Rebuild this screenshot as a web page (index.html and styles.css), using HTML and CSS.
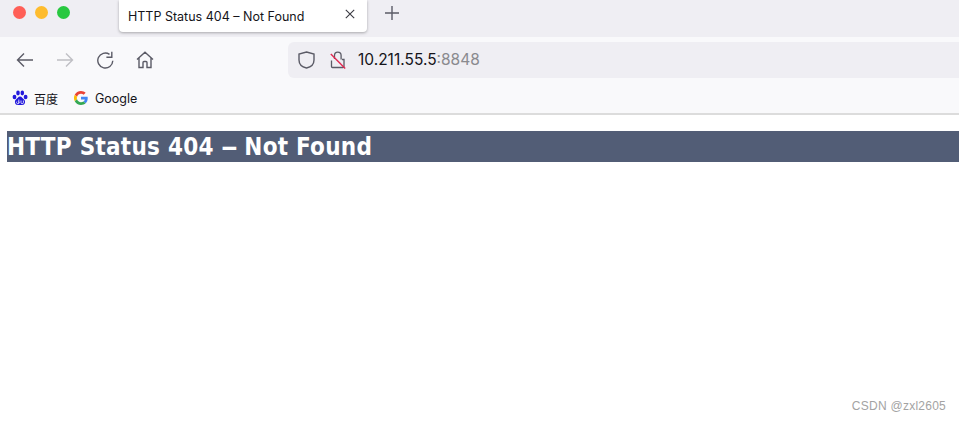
FILE: index.html
```html
<!DOCTYPE html>
<html lang="en">
<head>
    <meta charset="UTF-8">
    <title>HTTP Status 404 – Not Found</title>
    <link rel="stylesheet" href="styles.css">
</head>
<body>
    <div class="browser">
        <div class="tabstrip">
            <div class="traffic">
                <span class="dot dot-red"></span>
                <span class="dot dot-yellow"></span>
                <span class="dot dot-green"></span>
            </div>
            <div class="tab">
                <span class="tab-title">HTTP Status 404 – Not Found</span>
                <svg class="tab-close" width="10" height="10" viewBox="0 0 10 10"><path d="M.8.8l8.4 8.4M9.2.8L.8 9.2"/></svg>
            </div>
            <svg class="new-tab" width="14" height="14" viewBox="0 0 14 14"><path d="M7 0v14M0 7h14"/></svg>
        </div>
        <div class="toolbar">
            <div class="nav">
                <svg class="icon" width="18" height="16" viewBox="0 0 18 16"><path d="M17 8H1.500M8 1.500L1.500 8 8 14.500"/></svg>
                <svg class="icon icon-off" width="18" height="16" viewBox="0 0 18 16"><path d="M1 8h15.500M10 1.500L16.500 8 10 14.500"/></svg>
                <svg class="icon" width="18" height="18" viewBox="0 0 18 18"><path d="M16.800 9.800A7.500 7.500 0 1 1 13.500 3.300M15.800 .8v5.400h-5.400"/></svg>
                <svg class="icon" width="18" height="18" viewBox="0 0 18 18"><path d="M1 8.500L9 1.300l8 7.200M3 7v9.500h4v-5a1 1 0 0 1 1-1h2a1 1 0 0 1 1 1v5h4V7"/></svg>
            </div>
            <div class="urlbar">
                <svg class="icon" width="17" height="18" viewBox="0 0 17 18"><path d="M8.500 1L16 3v6c0 4-3 7-7.500 8C4 16 1 13 1 9V3z"/></svg>
                <svg class="lock" width="16" height="18" viewBox="0 0 16 18">
                    <path class="lock-body" d="M1.500 9.500v6a1 1 0 0 0 1 1h10.500a1 1 0 0 0 1-1v-7h-2M4.500 8V4.500a3.300 3.300 0 0 1 6.600 0v4"/>
                    <path class="lock-slash" d="M.8 3l14.400 14.400"/>
                </svg>
                <span class="url">10.211.55.5<span class="url-port">:8848</span></span>
            </div>
        </div>
        <div class="bookmarks">
            <div class="bookmark">
                <svg width="16" height="16" viewBox="0 0 16 16" fill="#2319dc">
                    <ellipse cx="2.500" cy="7" rx="1.900" ry="2.300"/>
                    <ellipse cx="6" cy="3" rx="1.800" ry="2.400"/>
                    <ellipse cx="10.300" cy="3" rx="1.800" ry="2.400"/>
                    <ellipse cx="13.600" cy="7" rx="1.900" ry="2.300"/>
                    <path d="M8 6.500c2 0 2.500 2 4 3 1.800 1.300 1.300 5.500-1.500 5.500H5.500C2.700 15 2.200 10.800 4 9.500c1.500-1 2-3 4-3z"/>
                    <path d="M6.800 9.500v3.800M4.800 11.600a1.300 1.300 0 1 0 2 0M9 10.500v2a1.200 1.200 0 0 0 2.400 0v-2" fill="none" stroke="#fff" stroke-width=".8"/>
                </svg>
                <span>百度</span>
            </div>
            <div class="bookmark">
                <svg width="14" height="14" viewBox="0 0 48 48">
                    <path fill="#ea4335" d="M24 9.500c3.500 0 6.700 1.300 9.100 3.500l6.800-6.800C35.800 2.400 30.300 0 24 0 14.600 0 6.500 5.400 2.600 13.200l7.900 6.200C12.400 13.600 17.700 9.500 24 9.500z"/>
                    <path fill="#4285f4" d="M47 24.500c0-1.600-.1-3.100-.4-4.500H24v9h13c-.6 3-2.300 5.500-4.800 7.200l7.700 6C44.400 37.900 47 31.800 47 24.500z"/>
                    <path fill="#fbbc05" d="M10.500 28.600a14.500 14.500 0 0 1 0-9.200l-7.900-6.200a24 24 0 0 0 0 21.600z"/>
                    <path fill="#34a853" d="M24 48c6.500 0 11.900-2.100 15.900-5.800l-7.700-6c-2.200 1.400-4.900 2.300-8.200 2.300-6.300 0-11.600-4.100-13.500-9.900l-7.900 6.200C6.500 42.600 14.600 48 24 48z"/>
                </svg>
                <span class="bookmark-latin">Google</span>
            </div>
        </div>
    </div>
    <main class="page">
        <h1>HTTP Status 404 <span class="dash">–</span> Not Found</h1>
    </main>
    <div class="watermark">CSDN @zxl2605</div>
</body>
</html>
```

FILE: styles.css
```css
:root {
    --color-strip: #efeef3;
    --color-bar: #f9f9fb;
    --color-icon: #5b5b66;
    --color-heading: #525d76;
}

html, body {
    height: 100%;
}

body {
    margin: 0;
    background: #fff;
    font-family: "Inter", "Noto Sans CJK SC", sans-serif;
    color: #15141a;
    overflow: hidden;
}

svg {
    display: block;
    flex: none;
}

.browser {
    margin-right: 2px;
    border-bottom: 2px solid #dcdcdc;
}

.tabstrip {
    height: 37px;
    display: flex;
    align-items: flex-start;
    background: var(--color-strip);
}

.traffic {
    display: flex;
    gap: 9px;
    padding: 6px 0 0 13px;
    width: 119px;
    box-sizing: border-box;
}

.dot {
    width: 13px;
    height: 13px;
    border-radius: 50%;
}

.dot-red { background: #ff5f57; }
.dot-yellow { background: #febc2e; }
.dot-green { background: #28c840; }

.tab {
    width: 248px;
    height: 32px;
    box-sizing: border-box;
    padding: 0 12px 0 9px;
    display: flex;
    align-items: center;
    justify-content: space-between;
    background: #fff;
    border-radius: 0 0 4px 4px;
    box-shadow: 0 1px 3px rgba(0, 0, 0, 0.3);
    font-size: 12.500px;
}

.tab-close path,
.new-tab path {
    fill: none;
    stroke: #3a3a42;
    stroke-width: 1.1;
}

.tab-close {
    margin-top: -5px;
}

.new-tab {
    margin: 6px 0 0 18px;
}

.new-tab path {
    stroke: var(--color-icon);
    stroke-width: 1.400;
}

.toolbar {
    height: 46px;
    display: flex;
    align-items: center;
    background: var(--color-bar);
    padding: 0 0 1px 16px;
    box-sizing: border-box;
}

.nav {
    display: flex;
    align-items: center;
    gap: 22px;
    width: 272px;
}

.icon path {
    fill: none;
    stroke: var(--color-icon);
    stroke-width: 1.400;
}

.icon-off path {
    stroke: #bfbfc4;
}

.urlbar {
    flex: 1;
    height: 36px;
    display: flex;
    align-items: center;
    padding-left: 10px;
    background: var(--color-strip);
    border-radius: 6px 0 0 6px;
}

.lock {
    margin-left: 15px;
}

.lock-body {
    fill: none;
    stroke: var(--color-icon);
    stroke-width: 1.300;
}

.lock-slash {
    fill: none;
    stroke: #e22850;
    stroke-width: 1.400;
}

.url {
    margin-left: 12px;
    font-size: 15.500px;
}

.url-port {
    color: #8a8a8f;
}

.bookmarks {
    height: 30px;
    display: flex;
    align-items: center;
    gap: 16px;
    padding: 0 0 0 12px;
    background: var(--color-bar);
    font-size: 12px;
}

.bookmark {
    display: flex;
    align-items: center;
    gap: 6px;
}

.bookmark-latin {
    font-size: 12.500px;
    margin-left: 1px;
}

.page {
    margin: 16px 0 0 7px;
}

h1 {
    margin: 0;
    height: 31px;
    line-height: 33px;
    margin-right: 2px;
    background: var(--color-heading);
    color: #fff;
    font-family: "DejaVu Sans", sans-serif;
    font-stretch: condensed;
    font-size: 24px;
    font-weight: bold;
    letter-spacing: 0.250px;
}

.dash {
    display: inline-block;
    margin: 0 2px;
    transform: scaleX(1.600);
}

.watermark {
    position: absolute;
    right: 15px;
    bottom: 8px;
    font-family: "Liberation Sans", sans-serif;
    font-size: 12px;
    letter-spacing: 0.250px;
    color: #a3a3a3;
}
```
